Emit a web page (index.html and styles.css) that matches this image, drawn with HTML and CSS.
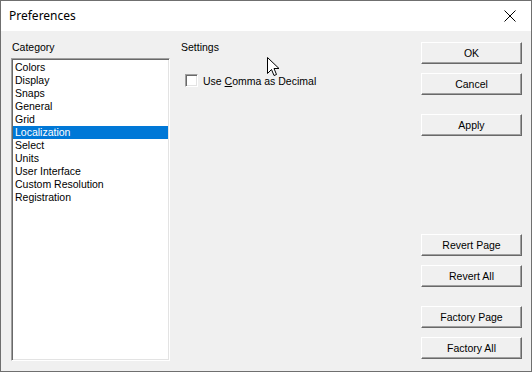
FILE: index.html
```html
<!DOCTYPE html>
<html lang="en">

<head>
    <meta charset="UTF-8">
    <meta name="viewport" content="width=device-width, initial-scale=1.0">
    <title>Preferences</title>
    <link rel="stylesheet" href="styles.css">
</head>

<body>
    <div class="window">
        <div class="titlebar">
            <span class="title">Preferences</span>
            <svg class="close" width="12" height="12" viewBox="0 0 12 12">
                <path d="M0.5 0.5 L11.5 11.5 M11.5 0.5 L0.5 11.5" stroke="#000" stroke-width="1" fill="none" />
            </svg>
        </div>
        <div class="content">
            <div class="col-category">
                <div class="label">Category</div>
                <div class="listbox">
                    <div class="item">Colors</div>
                    <div class="item">Display</div>
                    <div class="item">Snaps</div>
                    <div class="item">General</div>
                    <div class="item">Grid</div>
                    <div class="item selected">Localization</div>
                    <div class="item">Select</div>
                    <div class="item">Units</div>
                    <div class="item">User Interface</div>
                    <div class="item">Custom Resolution</div>
                    <div class="item">Registration</div>
                </div>
            </div>
            <div class="col-settings">
                <div class="label">Settings</div>
                <label class="check-row">
                    <span class="checkbox"></span>
                    <span>Use <u>C</u>omma as Decimal</span>
                </label>
            </div>
            <div class="col-buttons">
                <button class="btn">OK</button>
                <button class="btn">Cancel</button>
                <button class="btn gap-big">Apply</button>
                <button class="btn push">Revert Page</button>
                <button class="btn">Revert All</button>
                <button class="btn gap-big">Factory Page</button>
                <button class="btn">Factory All</button>
            </div>
        </div>
        <!-- mouse pointer sitting over the dialog -->
        <svg class="cursor" width="13" height="20" viewBox="0 0 13 20">
            <path d="M0.5 0.5 L0.5 16.5 L4.5 12.5 L7 18.5 L9.5 17.5 L7 11.5 L12 11.5 Z" fill="#fff" stroke="#000" stroke-width="1" stroke-linejoin="miter" />
        </svg>
    </div>
</body>

</html>
```

FILE: styles.css
```css
body {
    margin: 0;
    font-family: "Liberation Sans", Arial, sans-serif;
    font-size: 10.5px;
    color: #000;
}

.window {
    position: relative;
    width: 532px;
    height: 372px;
    box-sizing: border-box;
    border: 1px solid #6f6f6f;
    display: flex;
    flex-direction: column;
    background-color: #f0f0f0;
}

.titlebar {
    height: 30px;
    background-color: #fff;
    display: flex;
    align-items: center;
    justify-content: space-between;
    padding: 0 15px 0 8px;
}

.title {
    font-family: "Noto Sans", "Open Sans", sans-serif;
    font-size: 12px;
    margin-top: -1px;
}

.close {
    display: block;
}

.content {
    flex: 1;
    display: flex;
    padding: 10px 9px 10px 10px;
    gap: 11px;
}

.label {
    line-height: 13px;
    height: 13px;
}

.col-category {
    width: 159px;
    display: flex;
    flex-direction: column;
}

.col-category .label {
    margin-left: 1px;
    margin-bottom: 4px;
}

.listbox {
    flex: 1;
    background-color: #fff;
    border: 1px solid;
    border-color: #a0a0a0 #fff #fff #a0a0a0;
    box-shadow: inset 1px 1px #696969, inset -1px -1px #e3e3e3;
    padding: 2px 1px 2px 1px;
}

.item {
    height: 13px;
    line-height: 13px;
    padding-left: 2px;
    white-space: nowrap;
}

.item.selected {
    background-color: #0078d7;
    color: #fff;
}

.col-settings {
    flex: 1;
}

.check-row {
    display: flex;
    align-items: center;
    gap: 5px;
    margin-top: 20px;
    margin-left: 4px;
    height: 13px;
}

.checkbox {
    width: 13px;
    height: 13px;
    box-sizing: border-box;
    background-color: #fff;
    border: 1px solid;
    border-color: #a0a0a0 #fff #fff #a0a0a0;
    box-shadow: inset 1px 1px #696969, inset -1px -1px #e3e3e3;
}

.col-buttons {
    width: 101px;
    display: flex;
    flex-direction: column;
    padding-top: 1px;
    padding-bottom: 2px;
}

.btn {
    height: 22px;
    width: 101px;
    margin-top: 9px;
    padding: 0;
    font-family: "Liberation Sans", Arial, sans-serif;
    font-size: 10.5px;
    color: #000;
    background-color: #f0f0f0;
    border: 1px solid;
    border-color: #fff #696969 #696969 #fff;
    box-shadow: inset -1px -1px #a0a0a0;
}

.btn:first-child {
    margin-top: 0;
}

.btn.gap-big {
    margin-top: 19px;
}

.btn.push {
    margin-top: auto;
}

.cursor {
    position: absolute;
    left: 266px;
    top: 56px;
}
```
